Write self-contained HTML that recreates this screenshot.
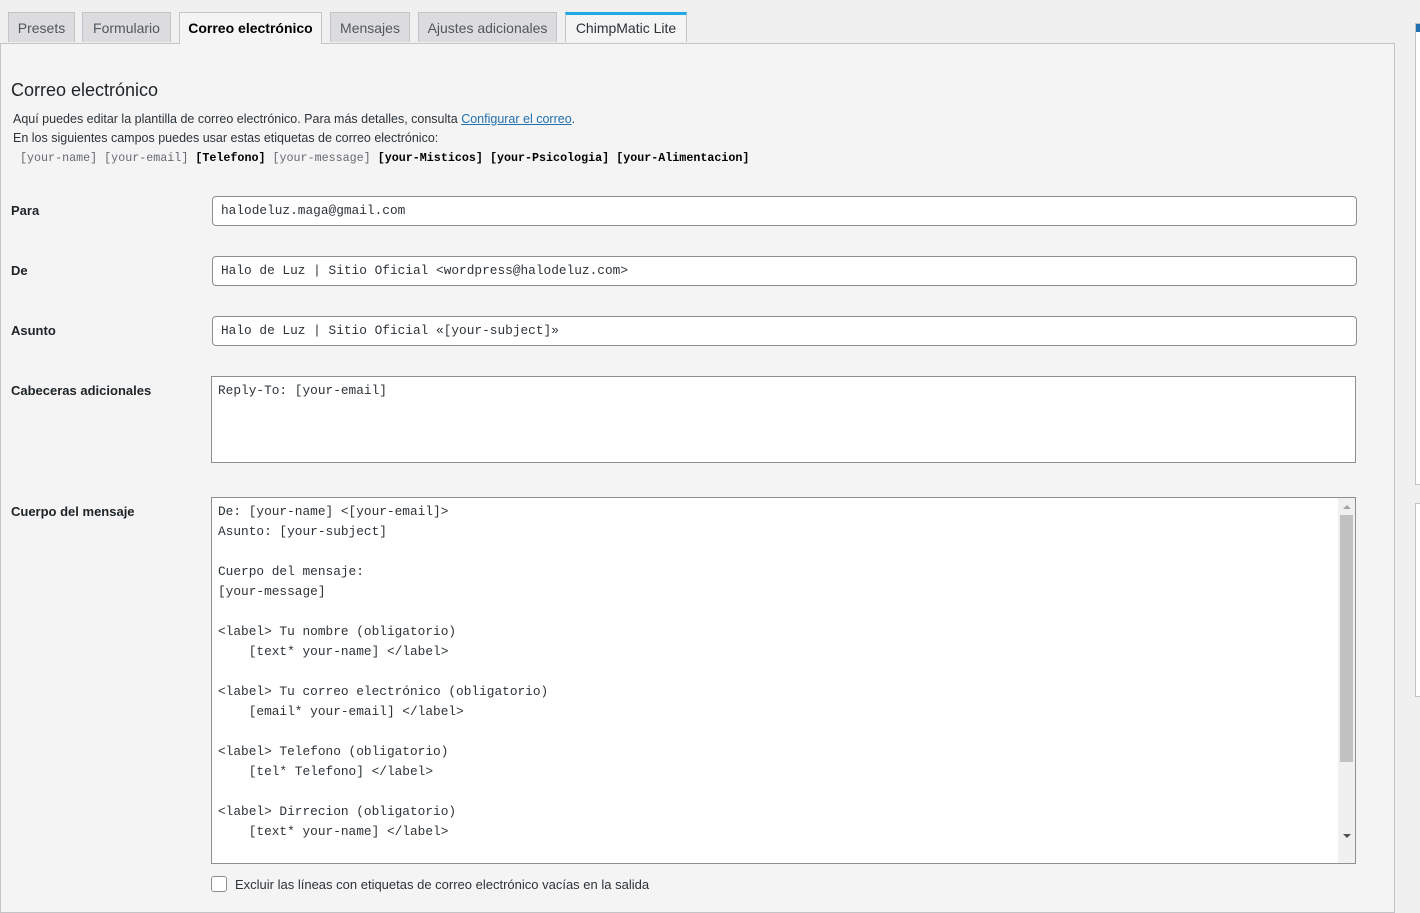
<!DOCTYPE html>
<html><head><meta charset="utf-8"><style>
body{margin:0;width:1420px;height:893px;overflow:hidden;background:#f0f0f1;font-family:"Liberation Sans",sans-serif;font-size:13px;color:#1d2327;position:relative}
.tab{position:absolute;top:12px;height:30px;border:1px solid #c3c4c7;border-bottom:none;background:#dcdcde;color:#50575e;font-size:14px;line-height:30px;text-align:center;box-sizing:border-box}
.tab.act{background:#f4f4f4;color:#000;font-weight:bold;height:32px;z-index:2}
.panel{position:absolute;left:0;top:43px;width:1395px;height:870px;background:#f4f4f4;border:1px solid #c3c4c7;box-sizing:border-box}
.abs{position:absolute}
.lbl{position:absolute;left:11px;font-weight:bold;font-size:13px;color:#1d2327}
.inp{position:absolute;left:212px;width:1145px;height:30px;background:#fff;border:1px solid #8c8f94;border-radius:4px;box-sizing:border-box;font-family:"Liberation Mono",monospace;font-size:12.8px;line-height:28px;padding-left:8px;color:#2c3338;white-space:pre}
.mono{font-family:"Liberation Mono",monospace;font-size:11.7px}
.ta{position:absolute;left:211px;width:1145px;background:#fff;border:1px solid #8c8f94;box-sizing:border-box;font-family:"Liberation Mono",monospace;font-size:12.8px;line-height:20px;padding:4px 6px;white-space:pre;color:#2c3338;overflow:hidden}
</style></head><body>
<div class="panel"></div>
<div class="tab" style="left:8px;width:67px">Presets</div>
<div class="tab" style="left:82px;width:89px">Formulario</div>
<div class="tab act" style="left:179px;width:143px">Correo electrónico</div>
<div class="tab" style="left:330px;width:80px">Mensajes</div>
<div class="tab" style="left:418px;width:139px">Ajustes adicionales</div>
<div class="tab" style="left:565px;width:122px;background:#f4f4f4;color:#2c3338;border-top:3px solid #21a8e6;line-height:27px">ChimpMatic Lite</div>
<div class="abs" style="left:1415px;top:23px;width:10px;height:460px;border:1px solid #c3c4c7;background:#fff"><div style="height:8px;background:#2271b1;width:4px"></div></div>
<div class="abs" style="left:1415px;top:503px;width:10px;height:192px;border:1px solid #c3c4c7;background:#fff"></div>

<div class="abs" style="left:11px;top:80px;font-size:18px;color:#1d2327">Correo electrónico</div>
<div class="abs" style="left:13px;top:112px;font-size:12.5px;color:#2c3338">Aquí puedes editar la plantilla de correo electrónico. Para más detalles, consulta <span style="color:#2271b1;text-decoration:underline">Configurar el correo</span>.</div>
<div class="abs" style="left:13px;top:131px;font-size:12.5px;color:#2c3338">En los siguientes campos puedes usar estas etiquetas de correo electrónico:</div>
<div class="abs mono" style="left:20px;top:151px;color:#646970;white-space:pre">[your-name] [your-email] <b style="color:#000">[Telefono]</b> [your-message] <b style="color:#000">[your-Misticos]</b> <b style="color:#000">[your-Psicologia]</b> <b style="color:#000">[your-Alimentacion]</b></div>

<div class="lbl" style="top:203px">Para</div>
<div class="inp" style="top:196px">halodeluz.maga@gmail.com</div>
<div class="lbl" style="top:263px">De</div>
<div class="inp" style="top:256px">Halo de Luz | Sitio Oficial &lt;wordpress@halodeluz.com&gt;</div>
<div class="lbl" style="top:323px">Asunto</div>
<div class="inp" style="top:316px">Halo de Luz | Sitio Oficial «[your-subject]»</div>
<div class="lbl" style="top:383px">Cabeceras adicionales</div>
<div class="ta" style="top:376px;height:87px">Reply-To: [your-email]</div>
<div class="lbl" style="top:504px">Cuerpo del mensaje</div>
<div class="ta" style="top:497px;height:367px;padding-right:24px">De: [your-name] &lt;[your-email]&gt;
Asunto: [your-subject]

Cuerpo del mensaje:
[your-message]

&lt;label&gt; Tu nombre (obligatorio)
    [text* your-name] &lt;/label&gt;

&lt;label&gt; Tu correo electrónico (obligatorio)
    [email* your-email] &lt;/label&gt;

&lt;label&gt; Telefono (obligatorio)
    [tel* Telefono] &lt;/label&gt;

&lt;label&gt; Dirrecion (obligatorio)
    [text* your-name] &lt;/label&gt;</div>
<div class="abs" style="left:1338px;top:498px;width:17px;height:365px;background:#f0f0f0"></div>
<div class="abs" style="left:1340px;top:515px;width:13px;height:247px;background:#c1c1c1"></div>
<div class="abs" style="left:1343px;top:505px;border:4px solid transparent;border-bottom:4px solid #a3a3a3;border-top:none"></div>
<div class="abs" style="left:1343px;top:834px;border:4px solid transparent;border-top:4px solid #505050;border-bottom:none"></div>
<div class="abs" style="left:211px;top:876px;width:14px;height:14px;border:1px solid #8c8f94;border-radius:3px;background:#fff"></div>
<div class="abs" style="left:235px;top:877px;font-size:13px;color:#2c3338">Excluir las líneas con etiquetas de correo electrónico vacías en la salida</div>
</body></html>
